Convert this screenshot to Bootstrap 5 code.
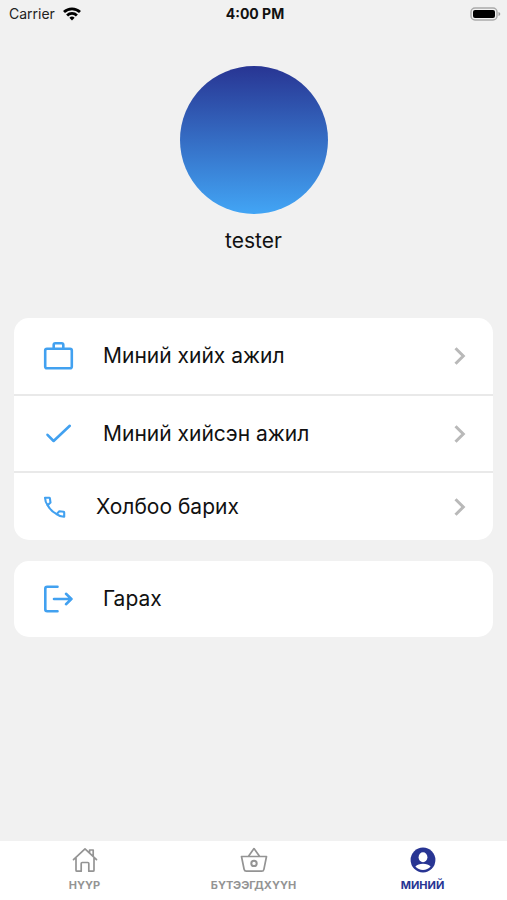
<!DOCTYPE html>
<html lang="mn">
<head>
<meta charset="utf-8">
<meta name="viewport" content="width=device-width, initial-scale=1">
<title>Миний</title>
<link href="https://cdn.jsdelivr.net/npm/bootstrap@5.3.0/dist/css/bootstrap.min.css" rel="stylesheet">
<style>
  body { font-family: Inter, "Liberation Sans", sans-serif; background: #f1f1f1; color: #111; }
  svg { display: block; flex: none; fill: none; stroke-linecap: round; stroke-linejoin: round; }
  .status-bar { height: 28px; padding: 0 6px 0 9px; font-size: 14px; line-height: 28px; color: #222; }
  .status-time { color: #111; }
  .wifi { stroke: #000; stroke-linecap: butt; }
  .profile { padding-top: 38px; margin-bottom: 63px; }
  .avatar { width: 148px; height: 148px; background: linear-gradient(#283593, #42a5f5); }
  .profile-name { font-size: 21px; line-height: 28px; margin-top: 13px; color: #111; }
  .menu-area { padding: 0 14px; }
  .menu-card { border-radius: 15px; overflow: hidden; margin-bottom: 21px; }
  .menu-row { min-height: 76px; padding: 0 26px 0 29px; gap: 29px; font-size: 21px; line-height: 28px; color: #111; }
  .menu-row + .menu-row { border-top: 2px solid #e9e9e9; min-height: 77px; }
  .menu-row + .menu-row-short { min-height: 69px; }
  .menu-icon { stroke: #42a1f0; }
  .chevron { stroke: #b9b9b9; stroke-linecap: butt; stroke-linejoin: miter; }
  .tab-bar { height: 59px; padding-top: 6px; }
  .tab-item { color: #949494; font-size: 11px; line-height: 14px; font-weight: 700; gap: 5px; }
  .tab-item.active { color: #283593; }
</style>
</head>
<body class="d-flex flex-column min-vh-100">
  <header class="status-bar row g-0 align-items-center">
    <div class="col d-flex align-items-center gap-2">
      <span>Carrier</span>
      <svg class="wifi" width="18" height="14" viewBox="0 0 18 14" stroke-width="2.8" aria-label="Wi-Fi"><path d="M1 5.1a11.4 11.4 0 0 1 16 0M4.1 8.4a7 7 0 0 1 9.8 0"/><path d="M6.4 10.8a3.8 3.8 0 0 1 5.2 0L9 13.6z" fill="#000" stroke="none"/></svg>
    </div>
    <div class="col-auto fw-bold status-time">4:00 PM</div>
    <div class="col d-flex justify-content-end">
      <svg width="31" height="14" viewBox="0 0 31 14" aria-label="Battery"><rect x="1" y="1" width="26" height="12" rx="4" stroke="#aaa" stroke-width="1.5"/><rect x="3" y="3" width="22" height="8" rx="2" fill="#000"/><path d="M28.5 5v4q1.8-.6 1.8-2t-1.8-2z" fill="#999"/></svg>
    </div>
  </header>

  <main class="flex-grow-1">
    <section class="profile d-flex flex-column align-items-center">
      <div class="avatar rounded-circle"></div>
      <h1 class="profile-name fw-normal mb-0">tester</h1>
    </section>

    <div class="menu-area">
      <nav class="menu-card bg-white">
        <a href="#todo" class="menu-row d-flex align-items-center text-decoration-none">
          <svg class="menu-icon" width="31" height="30" viewBox="0 0 31 30" stroke-width="2.6"><rect x="2.2" y="7.7" width="26.6" height="19.6" rx="1.8"/><path d="M10.7 7.5V3.8q0-1.6 1.6-1.6h6.4q1.6 0 1.6 1.6v3.7"/></svg>
          <span class="flex-grow-1">Миний хийх ажил</span>
          <svg class="chevron" width="14" height="20" viewBox="0 0 14 20" stroke-width="3"><path d="M2.5 2.2 10.3 10l-7.8 7.8"/></svg>
        </a>
        <a href="#done" class="menu-row d-flex align-items-center text-decoration-none">
          <svg class="menu-icon" width="31" height="30" viewBox="0 0 31 30" stroke-width="2.6"><path d="M4.5 15.8 10.6 22 26.8 6.8"/></svg>
          <span class="flex-grow-1">Миний хийсэн ажил</span>
          <svg class="chevron" width="14" height="20" viewBox="0 0 14 20" stroke-width="3"><path d="M2.5 2.2 10.3 10l-7.8 7.8"/></svg>
        </a>
        <a href="#contact" class="menu-row menu-row-short d-flex align-items-center text-decoration-none">
          <svg class="menu-icon" width="24" height="24" viewBox="0 0 24 24" stroke-width="2.1"><path d="M2 2.8h4.3q.5 0 .6.6l.6 4.2-2.8 2.7Q2.2 7.2 2 2.8z"/><path d="M4.7 10.3q3 5.8 9 8.8"/><path d="M13.7 19.1l2.6-2.8 4.3.5q.6.1.6.7v4.2q-4.3.1-7.5-2.6z"/></svg>
          <span class="flex-grow-1">Холбоо барих</span>
          <svg class="chevron" width="14" height="20" viewBox="0 0 14 20" stroke-width="3"><path d="M2.5 2.2 10.3 10l-7.8 7.8"/></svg>
        </a>
      </nav>

      <div class="menu-card bg-white">
        <button type="button" class="menu-row d-flex align-items-center w-100 border-0 bg-transparent text-start">
          <svg class="menu-icon" width="31" height="30" viewBox="0 0 31 30" stroke-width="2.6"><path d="M14.5 2.8H4.2q-1.9 0-1.9 1.9v20.6q0 1.9 1.9 1.9h10.3M11 15h17.5M23 9.8l5.4 5.2-5.4 5.2"/></svg>
          <span>Гарах</span>
        </button>
      </div>
    </div>
  </main>

  <nav class="tab-bar bg-white row g-0">
    <a href="#home" class="tab-item col d-flex flex-column align-items-center text-decoration-none">
      <svg width="26" height="26" viewBox="0 0 26 26" stroke="currentColor" stroke-width="1.7"><path d="M1.5 12.6 13 1.8l11.5 10.8M4 11v12.2q0 1 1 1h4.2v-7.7q0-1 1-1h5.6q1 0 1 1v7.7H21q1 0 1-1V11M17.6 5.5V3h3.6v6"/></svg>
      <span>НҮҮР</span>
    </a>
    <a href="#products" class="tab-item col d-flex flex-column align-items-center text-decoration-none">
      <svg width="28" height="26" viewBox="0 0 28 26" stroke="currentColor" stroke-width="1.7"><path d="M1.5 9.5h25l-2.6 12.8q-.4 1.9-2.2 1.9H6.3q-1.8 0-2.2-1.9zM8.5 9.3 14 1.6l5.5 7.7"/><circle cx="14" cy="16.4" r="2.7" stroke-width="2"/></svg>
      <span>БҮТЭЭГДХҮҮН</span>
    </a>
    <a href="#mine" class="tab-item active col d-flex flex-column align-items-center text-decoration-none" aria-current="page">
      <svg width="26" height="26" viewBox="0 0 26 26"><circle cx="13" cy="13" r="12.4" fill="#283593"/><ellipse cx="13" cy="10.2" rx="4.4" ry="5" fill="#fff"/><path d="M5.4 19.6Q8 16.8 13 16.8t7.6 2.8Q17.6 23 13 23t-7.6-3.4z" fill="#fff"/></svg>
      <span>МИНИЙ</span>
    </a>
  </nav>
<script src="https://cdn.jsdelivr.net/npm/bootstrap@5.3.0/dist/js/bootstrap.bundle.min.js"></script>
</body>
</html>
